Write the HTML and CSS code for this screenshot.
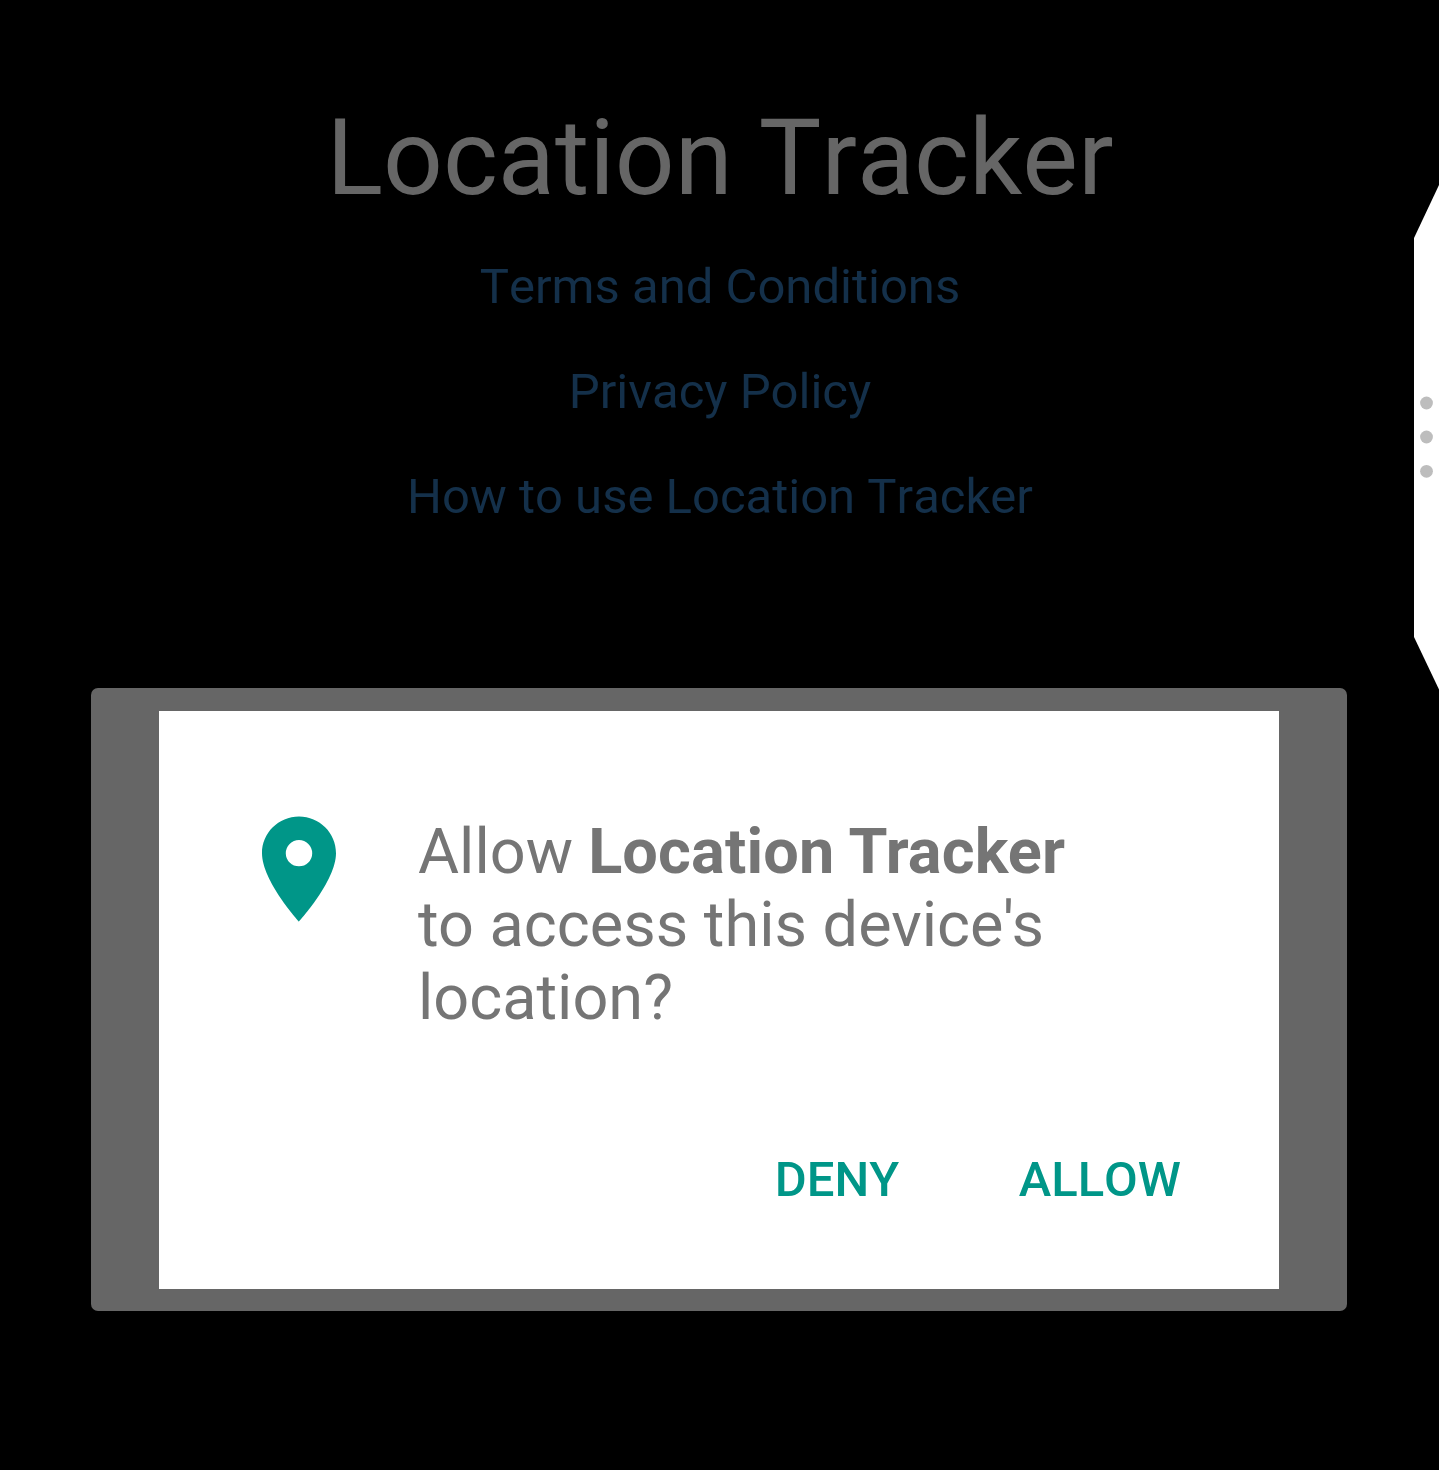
FILE: index.html
```html
<!DOCTYPE html>
<html lang="en">
<head>
<meta charset="utf-8">
<title>Location Tracker</title>
<link rel="stylesheet" href="styles.css">
</head>
<body>
<main class="screen">
  <h1 class="title">Location Tracker</h1>
  <nav class="links">
    <a class="link">Terms and Conditions</a>
    <a class="link">Privacy Policy</a>
    <a class="link">How to use Location Tracker</a>
  </nav>
  <section class="backdrop">
    <div class="dialog" role="dialog">
      <div class="message">
        <svg class="pin" viewBox="5 1.920 14 20.180" preserveAspectRatio="none"><path fill="#009688" d="M12 2C8.13 2 5 5.13 5 9c0 5.25 7 13 7 13s7-7.75 7-13c0-3.870-3.130-7-7-7zm0 9.500a2.500 2.500 0 1 1 0-5 2.500 2.500 0 0 1 0 5z"/></svg>
        <p class="question">Allow <b>Location Tracker</b><br>to access this device's<br>location?</p>
      </div>
      <div class="actions">
        <button class="action">DENY</button>
        <button class="action">ALLOW</button>
      </div>
    </div>
  </section>
  <aside class="edge-handle">
    <svg width="25" height="506" viewBox="0 0 25 506"><path fill="#fff" d="M25 1V505.500L0 453V54z"/><g fill="#bdbdbd"><circle cx="12.500" cy="219" r="6.400"/><circle cx="12.500" cy="253" r="6.400"/><circle cx="12.500" cy="287.300" r="6.400"/></g></svg>
  </aside>
</main>
</body>
</html>
```
FILE: styles.css
```css
* { box-sizing: border-box; }
body { margin: 0; background: #000; font-family: Roboto, sans-serif; font-kerning: none; }
.screen {
  position: relative;
  height: 1470px;
  padding-top: 93px;
  display: flex;
  flex-direction: column;
  align-items: center;
  overflow: hidden;
}
.title { margin: 0; padding-left: 1px; color: #666; font-size: 105px; font-weight: 400; line-height: 132px; white-space: nowrap; }
.links { display: flex; flex-direction: column; align-items: center; margin-top: 9px; padding-left: 1px; }
.link { color: #14304a; font-size: 49px; line-height: 105px; white-space: nowrap; }
.backdrop { width: 1256px; height: 623px; margin-top: 139px; margin-right: 1px; padding: 23px 68px 22px; background: #666; border-radius: 7px; }
.dialog { height: 578px; padding: 105px 98px 0 103px; background: #fff; }
.message { display: flex; align-items: flex-start; gap: 82px; }
.pin { width: 74px; height: 106px; flex: none; }
.question { margin: -1px 0 0; color: #757575; font-size: 63px; line-height: 73px; font-kerning: normal; white-space: nowrap; }
.question b { margin-left: -0.5px; letter-spacing: 0.15px; }
.actions { display: flex; justify-content: flex-end; gap: 119.500px; margin-top: 116px; }
.action { padding: 0; border: 0; background: none; color: #009688; font: 500 49px/60px Roboto, sans-serif; font-kerning: none; }
.edge-handle { position: absolute; top: 184px; right: 0; width: 25px; height: 506px; }
.edge-handle svg { display: block; }
```
